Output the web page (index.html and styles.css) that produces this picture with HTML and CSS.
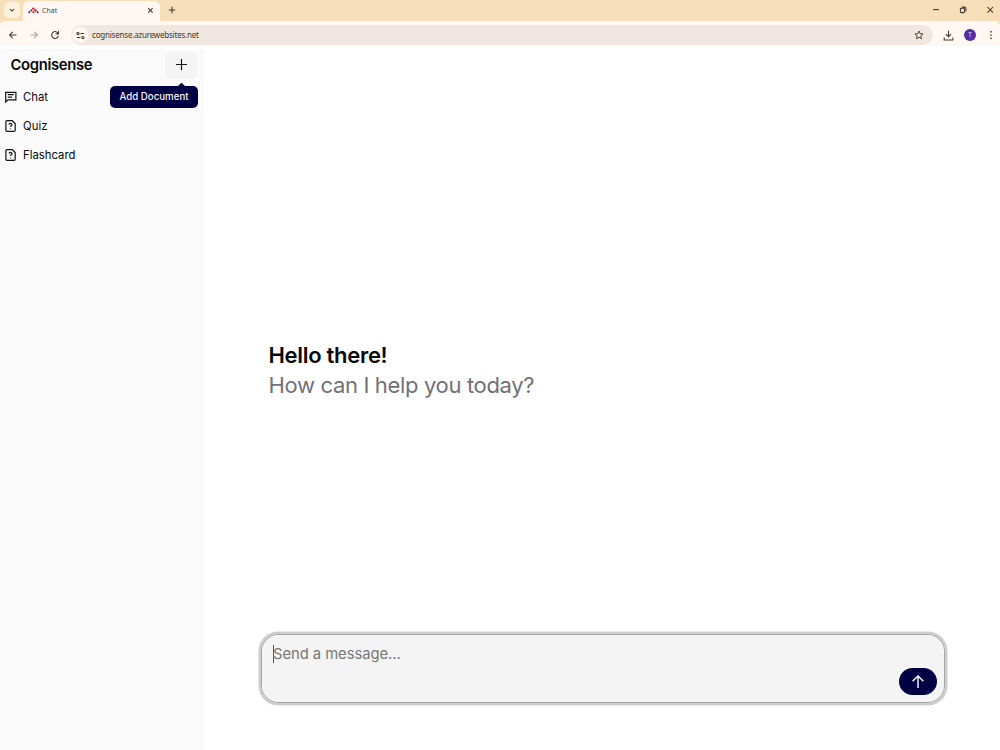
FILE: index.html
```html
<!DOCTYPE html>
<html lang="en">
<head>
<meta charset="utf-8">
<title>Chat</title>
<link rel="stylesheet" href="styles.css">
</head>
<body>
<div class="window">
  <header class="tabstrip">
    <div class="tab-search"><svg width="6" height="6" viewBox="0 0 6 6"><path d="M1 2l2 2 2-2" class="ink"/></svg></div>
    <div class="tab">
      <svg class="favicon" width="11" height="7" viewBox="0 0 11 7"><path d="M1.3 5L3.4 3.3 5.3 1.6 7.4 3.4 9.5 5M3.5 3.5L5.4 5.1 7.4 3.4" fill="none" stroke="#e8a0a4" stroke-width=".7"/><g fill="#df1731"><circle cx="5.3" cy="1.6" r="1.2"/><circle cx="7.4" cy="3.5" r="1.2"/><circle cx="5.4" cy="5.2" r="1"/></g><g fill="#333"><circle cx="1.3" cy="5.2" r="1"/><circle cx="3.3" cy="3.4" r="1"/><circle cx="9.6" cy="5.2" r="1"/></g></svg>
      <span class="tab-title">Chat</span>
      <svg class="tab-close" width="7" height="7" viewBox="0 0 7 7"><path d="M1.2 1.2l4.4 4.4M5.6 1.2L1.2 5.6" class="ink"/></svg>
    </div>
    <svg class="new-tab" width="8" height="8" viewBox="0 0 8 8"><path d="M4 .8v6.4M.8 4h6.4" class="ink"/></svg>
    <div class="window-controls">
      <svg width="8" height="8" viewBox="0 0 8 8"><path d="M1 3.6h6" class="ink"/></svg>
      <svg width="8" height="8" viewBox="0 0 8 8"><rect x="1.4" y="2.2" width="4.2" height="4.4" rx="1" class="ink"/><path d="M2.7 1.1h2.6q1.6 0 1.6 1.6v2.7" class="ink"/></svg>
      <svg width="8" height="8" viewBox="0 0 8 8"><path d="M1.4 1l5.6 5.6M7 1L1.4 6.6" class="ink"/></svg>
    </div>
  </header>
  <div class="toolbar-wrap">
  <div class="toolbar">
    <nav class="history">
      <svg width="10" height="10" viewBox="0 0 10 10"><path d="M8.5 5H1.7M4.8 1.8L1.6 5l3.2 3.2" class="ink"/></svg>
      <svg width="10" height="10" viewBox="0 0 10 10"><path d="M1.5 5h6.8M5.2 1.8L8.4 5 5.2 8.2" class="ink faded"/></svg>
      <svg width="10" height="10" viewBox="0 0 10 10"><path d="M8.2 3.7A3.4 3.4 0 1 0 8.3 6M8.5 1v2.9H5.6" class="ink"/></svg>
    </nav>
    <div class="address">
      <div class="site-info"><svg width="9" height="9" viewBox="0 0 9 9"><circle cx="2" cy="2.5" r="1.1" class="ink"/><path d="M4.6 2.5h3.5M.8 6.5h3.5" class="ink"/><circle cx="6.9" cy="6.5" r="1.1" class="ink"/></svg></div>
      <span class="url">cognisense.azurewebsites.net</span>
      <svg class="star" width="10" height="10" viewBox="0 0 10 10"><path d="M5 1l1.15 2.7 2.9.25-2.2 1.95.65 2.85L5 7.25 2.5 8.75l.65-2.85L.95 3.95l2.9-.25z" class="ink thin"/></svg>
    </div>
    <svg class="download" width="11" height="11" viewBox="0 0 11 11"><path d="M5.5 .8v5.8M2.9 4.2l2.6 2.5 2.6-2.5M1.2 7.6v2.3h8.6V7.6" class="ink"/></svg>
    <div class="avatar">T</div>
    <svg class="kebab" width="4" height="10" viewBox="0 0 4 10"><g fill="#554c3c"><circle cx="2" cy="1.7" r=".85"/><circle cx="2" cy="5" r=".85"/><circle cx="2" cy="8.3" r=".85"/></g></svg>
  </div>
  </div>
  <div class="app">
    <aside class="sidebar">
      <div class="sidebar-head">
        <span class="brand">Cognisense</span>
        <button class="add"><svg width="13" height="13" viewBox="0 0 13 13"><path d="M6.5 1v11M1 6.5h11" class="line"/></svg></button>
        <div class="tooltip">Add Document</div>
      </div>
      <ul class="menu">
        <li><svg width="12" height="12" viewBox="0 0 12 12"><path d="M.7 11V1.4h10.2v7.4H2.9z" class="line"/><path d="M2.8 3.7h6M2.8 6.2h4.3" class="line"/></svg><span>Chat</span></li>
        <li><svg width="12" height="12" viewBox="0 0 12 12"><path d="M.9 1.8q0-1.1 1.1-1.1h5.3l2.9 2.8v6.7q0 1.1-1.1 1.1H2q-1.1 0-1.1-1.1z" class="line"/><path d="M4.1 4.6c.1-1.8 2.9-1.6 2.8.1 0 1-1.3 1.2-1.4 2.2M5.5 8.5v.8" class="line"/></svg><span>Quiz</span></li>
        <li><svg width="12" height="12" viewBox="0 0 12 12"><path d="M.9 1.8q0-1.1 1.1-1.1h5.3l2.9 2.8v6.7q0 1.1-1.1 1.1H2q-1.1 0-1.1-1.1z" class="line"/><path d="M4.1 4.6c.1-1.8 2.9-1.6 2.8.1 0 1-1.3 1.2-1.4 2.2M5.5 8.5v.8" class="line"/></svg><span>Flashcard</span></li>
      </ul>
    </aside>
    <main class="chat">
      <div class="greeting">
        <div><span class="hello">Hello there!</span></div>
        <div><span class="help">How can I help you today?</span></div>
      </div>
      <div class="composer">
        <div class="prompt"><span class="caret"></span><span class="placeholder">Send a message...</span></div>
        <button class="send"><svg width="16" height="16" viewBox="0 0 16 16"><path d="M8 14V2M2.6 7.3L8 1.9l5.4 5.4" /></svg></button>
      </div>
    </main>
  </div>
</div>
</body>
</html>
```
FILE: styles.css
```css
* { box-sizing: border-box; }
body { margin: 0; background: #fff; font-family: Inter, "Liberation Sans", sans-serif; color: #09090b; }
svg { display: block; flex: none; }
button { border: 0; padding: 0; display: flex; align-items: center; justify-content: center; }
.ink { fill: none; stroke: #40382a; stroke-width: 1.05; }
.thin { stroke-width: .9; }
.faded { stroke: #aaa198; }
.line { fill: none; stroke: #151518; stroke-width: 1.2; }
.window { width: 1000px; height: 750px; display: flex; flex-direction: column; overflow: hidden; }

.tabstrip { height: 21px; flex: none; display: flex; background: #f5deb8; font-family: "Noto Sans", sans-serif; }
.tab-search { width: 16px; height: 16px; margin: 2px 0 0 4px; border-radius: 5px; background: #fdf0dc; display: flex; align-items: center; justify-content: center; }
.tab { width: 137px; height: 20px; margin: 1px 0 0 3px; border-radius: 6px 6px 0 0; background: #fff8f2; display: flex; align-items: center; padding: 0 6px 1px 5px; }
.tab-title { margin-left: 3px; font-size: 7px; color: #50483c; line-height: 10px; }
.tab-close { margin-left: auto; }
.new-tab { margin: 6px 0 0 8px; }
.window-controls { margin: 6px 6px 0 auto; display: flex; gap: 19px; }

.toolbar-wrap { flex: none; background: linear-gradient(#f5deb8 8px, #fff8f2 8px); }
.toolbar { height: 25px; display: flex; align-items: center; background: #fff8f2; border-radius: 5px 5px 0 0; padding: 3px 7px 0 8px; }
.history { display: flex; gap: 11px; }
.address { flex: none; margin-left: 11px; width: 862px; height: 20px; border-radius: 10px; background: #efe7e0; display: flex; align-items: center; padding: 0 9px 0 1px; }
.site-info { width: 16px; height: 16px; border-radius: 50%; background: #fff8f2; display: flex; align-items: center; justify-content: center; }
.url { margin-left: 4px; font: 8px/12px "Noto Sans", sans-serif; letter-spacing: -.2px; color: #40392f; }
.star { margin-left: auto; }
.download { margin-left: 10px; }
.avatar { width: 12px; height: 12px; margin-left: 10px; border-radius: 50%; background: #512da8; color: #e6defa; font: 6.5px/12px Roboto, sans-serif; text-align: center; }
.kebab { margin-left: 13px; }

.app { flex: 1; display: flex; padding-top: 3px; }
.sidebar { width: 204px; background: #fafafa; }
.sidebar-head { position: relative; height: 30px; display: flex; align-items: center; justify-content: space-between; padding: 1px 7px 0 10.4px; }
.brand { font-size: 14.8px; font-weight: 600; line-height: 20px; letter-spacing: -.3px; }
.add { width: 32px; height: 26px; border-radius: 5px; background: #f4f4f5; }
.tooltip { position: absolute; left: 110px; top: 37px; width: 88px; height: 22px; border-radius: 5px; background: #020044; color: #f4f4fa; font-size: 9.7px; font-weight: 500; line-height: 22px; text-align: center; white-space: nowrap; }
.tooltip::before { content: ""; position: absolute; left: 68px; top: -2px; width: 7px; height: 7px; border-radius: 1px; background: #020044; transform: rotate(45deg); }
.menu { list-style: none; margin: 3px 0 0; padding: 0 0 0 4.5px; }
.menu li { height: 29px; display: flex; align-items: center; gap: 6.6px; font-size: 11.3px; line-height: 16px; }

.chat { flex: 1; display: flex; flex-direction: column; padding: 291px 53px 0 55px; }
.greeting { padding-left: 9.5px; font-size: 22px; line-height: 30px; height: 292px; }
.hello { font-weight: 600; letter-spacing: -.3px; }
.help { color: #71717a; letter-spacing: -.34px; }
.composer { height: 73px; border: 2px solid #cdcdcd; border-radius: 19px; background: #f4f4f4; box-shadow: inset 0 0 0 1px #a6a6a6, 0 0 0 .6px #d4d4d4; display: flex; padding: 11px 8px 8px 12px; justify-content: space-between; }
.prompt { display: flex; height: 18px; font-size: 14.8px; line-height: 18px; letter-spacing: -.05px; color: #777; }
.caret { width: 1px; height: 18px; margin-right: -1px; background: #555; }
.send { align-self: flex-end; width: 38px; height: 27px; border-radius: 13.5px; background: #020044; }
.send path { fill: none; stroke: #fff; stroke-width: 1.4; }
```
